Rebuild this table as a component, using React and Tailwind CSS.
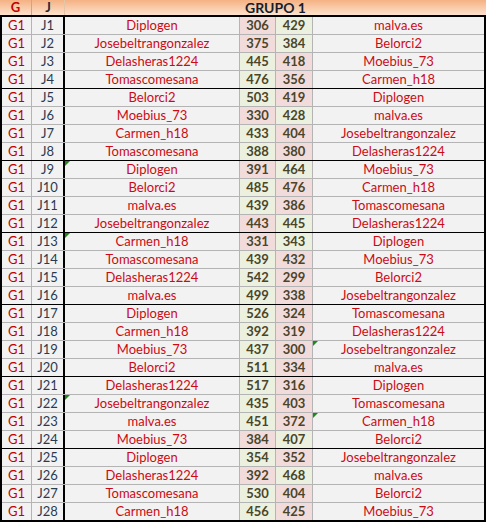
import React from "react";

const rows = [
  ["J1", "Diplogen", 306, 429, "malva.es"],
  ["J2", "Josebeltrangonzalez", 375, 384, "Belorci2"],
  ["J3", "Delasheras1224", 445, 418, "Moebius_73"],
  ["J4", "Tomascomesana", 476, 356, "Carmen_h18"],
  ["J5", "Belorci2", 503, 419, "Diplogen"],
  ["J6", "Moebius_73", 330, 428, "malva.es"],
  ["J7", "Carmen_h18", 433, 404, "Josebeltrangonzalez"],
  ["J8", "Tomascomesana", 388, 380, "Delasheras1224"],
  ["J9", "Diplogen", 391, 464, "Moebius_73", "L"],
  ["J10", "Belorci2", 485, 476, "Carmen_h18"],
  ["J11", "malva.es", 439, 386, "Tomascomesana"],
  ["J12", "Josebeltrangonzalez", 443, 445, "Delasheras1224"],
  ["J13", "Carmen_h18", 331, 343, "Diplogen", "L"],
  ["J14", "Tomascomesana", 439, 432, "Moebius_73"],
  ["J15", "Delasheras1224", 542, 299, "Belorci2"],
  ["J16", "malva.es", 499, 338, "Josebeltrangonzalez"],
  ["J17", "Diplogen", 526, 324, "Tomascomesana"],
  ["J18", "Carmen_h18", 392, 319, "Delasheras1224"],
  ["J19", "Moebius_73", 437, 300, "Josebeltrangonzalez", "R"],
  ["J20", "Belorci2", 511, 334, "malva.es"],
  ["J21", "Delasheras1224", 517, 316, "Diplogen"],
  ["J22", "Josebeltrangonzalez", 435, 403, "Tomascomesana", "L"],
  ["J23", "malva.es", 451, 372, "Carmen_h18", "R"],
  ["J24", "Moebius_73", 384, 407, "Belorci2"],
  ["J25", "Diplogen", 354, 352, "Josebeltrangonzalez"],
  ["J26", "Delasheras1224", 392, 468, "malva.es"],
  ["J27", "Tomascomesana", 530, 404, "Belorci2"],
  ["J28", "Carmen_h18", 456, 425, "Moebius_73"],
];

// petit triangle vert (commentaire Excel)
function Mark() {
  return (
    <span className="absolute left-0 top-0 w-0 h-0 border-t-[5px] border-t-[#1a8a1a] border-r-[5px] border-r-transparent" />
  );
}

export default function App() {
  return (
    <div
      className="w-[486px] h-[523px] bg-white text-[13px] leading-none"
      style={{ fontFamily: "Lato, 'Open Sans', sans-serif" }}
    >
      {/* En-tête */}
      <div className="flex h-[17px] border-b-2 border-black bg-gradient-to-b from-[#f4b183] to-[#fde2cc] font-bold">
        <div className="w-[32px] flex items-center justify-center text-[#c00000] border-r border-[#c9a58a]">G</div>
        <div className="w-[33px] flex items-center justify-center text-[#1c2a3c] border-r border-[#e6c4a8]">J</div>
        <div className="flex-1 flex items-center justify-center text-[#141e2e] text-[14px]">GRUPO 1</div>
      </div>

      {/* Matchs */}
      <div className="w-[486px] border-l-2 border-r-2 border-b-2 border-black">
        {rows.map(([j, a, s1, s2, b, mark], i) => {
          const last = i % 4 === 3 && i !== rows.length - 1;
          const bb = last ? "border-b border-b-black" : "border-b border-b-[#b4b4b4]";
          const noB = i === rows.length - 1 ? "border-b-0 h-[17px]" : "h-[18px]";
          const c1 = s1 > s2 ? "bg-[#ebf1de]" : "bg-[#f2dcdb]";
          const c2 = s2 > s1 ? "bg-[#ebf1de]" : "bg-[#f2dcdb]";
          return (
            <div key={j} className={`flex bg-[#f2f2f2] ${bb} ${noB}`}>
              <div className="w-[30px] flex items-center justify-center border-r border-[#b4b4b4] text-[#c00000]">G1</div>
              <div className="w-[33px] flex items-center justify-center border-r-2 border-black text-[#2a3a50]">{j}</div>
              <div className="relative w-[175px] flex items-center justify-center border-r border-[#b4b4b4] text-[#cc0a14]">
                {mark === "L" && <Mark />}
                {a}
              </div>
              <div className={`w-[36px] flex items-center justify-center border-r border-[#b4b4b4] font-bold text-[#4a452a] ${c1}`}>{s1}</div>
              <div className={`w-[37px] flex items-center justify-center border-r border-[#b4b4b4] font-bold text-[#4a452a] ${c2}`}>{s2}</div>
              <div className="relative w-[171px] flex items-center justify-center text-[#cc0a14]">
                {mark === "R" && <Mark />}
                {b}
              </div>
            </div>
          );
        })}
      </div>
    </div>
  );
}
